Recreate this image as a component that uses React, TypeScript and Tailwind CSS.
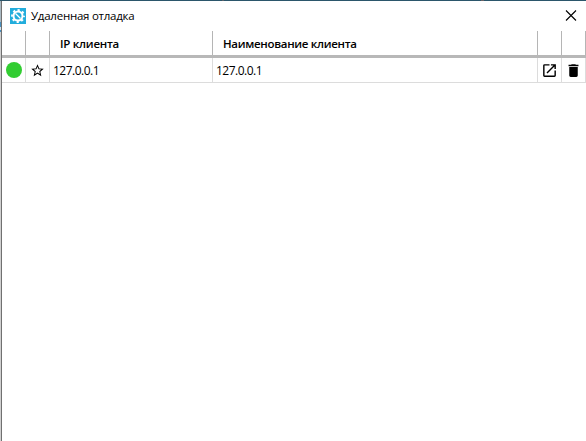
import React from "react";

const FONT = "font-['Open_Sans','Noto_Sans',sans-serif]";

function GearLogo() {
  return (
    <svg className="block h-4 w-4 shrink-0" viewBox="0 0 16 16">
      <rect width="16" height="16" fill="#22addc" />
      <circle cx="8" cy="8" r="4.5" fill="none" stroke="#fff" strokeWidth="2" />
      <circle cx="8" cy="8" r="6" fill="none" stroke="#fff" strokeWidth="1.8" strokeDasharray="2.3 2.412" strokeDashoffset="1.15" />
      <path d="M5.5 5.5 10.5 10.5" stroke="#fff" strokeWidth="1.3" />
    </svg>
  );
}

function HeaderCell({ className, children }: { className: string; children?: React.ReactNode }) {
  return (
    <div className={`flex items-center border-r border-[#b5b5b5] text-[11.5px] font-semibold leading-none whitespace-nowrap ${className}`}>
      {children}
    </div>
  );
}

function Cell({ className, children }: { className: string; children?: React.ReactNode }) {
  return (
    <div className={`flex items-center border-r border-[#dcdcdc] text-[12px] leading-none whitespace-nowrap ${className}`}>
      {children}
    </div>
  );
}

export default function App() {
  return (
    <div className={`flex h-[441px] w-[586px] flex-col overflow-hidden bg-white text-black ${FONT}`}>
      <div className="flex h-px shrink-0 bg-[#2b566b]">
        <div className="ml-[222px] w-[2px] bg-[#5b6068]" />
        <div className="ml-[257px] w-[3px] bg-[#6b6266]" />
      </div>
      <div className="flex min-h-0 flex-1">
        <div className="flex w-px shrink-0 flex-col bg-[#d0d0d0]">
          <div className="h-[21px] bg-[#a9b9c2]" />
          <div className="h-[5px] bg-[#4a8fbd]" />
          <div className="h-[3px] bg-[#d5e3ec]" />
          <div className="h-[2px] bg-[#4a8fbd]" />
        </div>
        <div className="w-px shrink-0 bg-[#707070]" />
        <div className="flex min-w-0 flex-1 flex-col">
          <div className="flex h-[30px] items-center pl-2 pr-[9px]">
            <GearLogo />
            <span className="ml-[5px] flex-1 text-[11.5px] leading-none tracking-[-0.25px]">Удаленная отладка</span>
            <svg className="h-3 w-3" viewBox="0 0 12 12" fill="none" stroke="#000" strokeWidth="1.1">
              <path d="M1 .5 11 10.5M11 .5 1 10.5" />
            </svg>
          </div>
          <div className="flex h-[27px] border-b-3 border-[#b8b8b8]">
            <HeaderCell className="w-6" />
            <HeaderCell className="w-6" />
            <HeaderCell className="w-[163px] pl-[10px] pt-[2px] tracking-[-0.25px]">IP клиента</HeaderCell>
            <HeaderCell className="w-[325px] pl-[10px] pt-[2px] tracking-[-0.3px]">Наименование клиента</HeaderCell>
            <HeaderCell className="w-6" />
            <HeaderCell className="w-6" />
          </div>
          <div className="flex h-[25px] border-b border-[#dcdcdc]">
            <Cell className="w-6 justify-center pl-px">
              <div className="h-4 w-4 rounded-full bg-[#32cd32]" />
            </Cell>
            <Cell className="w-6 justify-center">
              <svg className="h-[15px] w-[15px]" viewBox="0 0 24 24">
                <path d="M12 15.39 8.24 17.66 9.23 13.38 5.91 10.5 10.29 10.13 12 6.09 13.71 10.13 18.09 10.5 14.77 13.38 15.76 17.66M22 9.24 14.81 8.63 12 2 9.19 8.63 2 9.24 7.45 13.97 5.82 21 12 17.27 18.18 21 16.54 13.97z" />
              </svg>
            </Cell>
            <Cell className="w-[163px] pl-[3px] pt-[2px] tracking-[-0.5px]">127.0.0.1</Cell>
            <Cell className="w-[325px] pl-[3px] pt-[2px] tracking-[-0.5px]">127.0.0.1</Cell>
            <Cell className="w-6 justify-center">
              <svg className="h-[17px] w-[17px]" viewBox="0 0 24 24">
                <path d="M14 3v2h3.59l-9.83 9.83 1.41 1.41L19 6.41V10h2V3m-2 16H5V5h7V3H5a2 2 0 0 0-2 2v14a2 2 0 0 0 2 2h14a2 2 0 0 0 2-2v-7h-2z" />
              </svg>
            </Cell>
            <Cell className="w-6 justify-center">
              <svg className="h-[17px] w-[17px]" viewBox="0 0 24 24">
                <path d="M19 4h-3.5l-1-1h-5l-1 1H5v2h14M6 19a2 2 0 0 0 2 2h8a2 2 0 0 0 2-2V7H6z" />
              </svg>
            </Cell>
          </div>
        </div>
      </div>
    </div>
  );
}
